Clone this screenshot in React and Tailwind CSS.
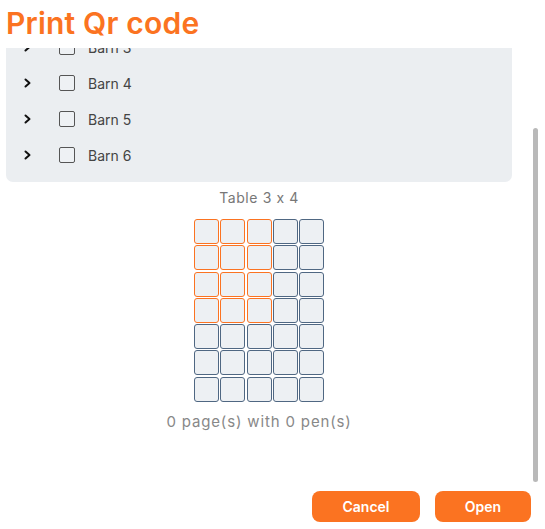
import React from 'react';

const font = { fontFamily: 'Inter, "Noto Sans", sans-serif' };

const barns = ['Barn 3', 'Barn 4', 'Barn 5', 'Barn 6'];

const Chevron = () => (
  <svg width="8" height="10" viewBox="0 0 8 10" className="shrink-0">
    <path d="M1.5 1.5 L5.5 5 L1.5 8.5" fill="none" stroke="#111" strokeWidth="2" strokeLinecap="round" strokeLinejoin="round" />
  </svg>
);

const BarnRow = ({ name }) => (
  <div className="flex items-center h-[36px]">
    <div className="w-[17px] ml-[18px] flex items-center">
      <Chevron />
    </div>
    <div className="ml-[18px] w-[16px] h-[16px] border border-[#555] rounded-[2px] bg-[#eef1f4]" />
    <span className="ml-[13px] text-[14px] text-[#444]">{name}</span>
  </div>
);

const cols = 5;
const rows = 7;
const selCols = 3;
const selRows = 4;

const App = () => {
  const cells = [];
  for (let r = 0; r < rows; r++) {
    for (let c = 0; c < cols; c++) {
      const selected = r < selRows && c < selCols;
      cells.push(
        <div
          key={`${r}-${c}`}
          className={
            selected
              ? 'w-[25px] h-[25px] rounded-[3px] border border-[#fb7321] bg-[#edf0f3]'
              : 'w-[25px] h-[25px] rounded-[3px] border border-[#4f6782] bg-[#edf0f3]'
          }
        />
      );
    }
  }

  return (
    <div className="w-[545px] h-[529px] bg-white flex flex-col overflow-hidden" style={font}>
      <div className="h-[48px] shrink-0 flex items-center px-[6px]">
        <h1 className="text-[30px] font-semibold text-[#fb7321] leading-none -mt-[2px] tracking-[0.2px]">Print Qr code</h1>
      </div>

      <div className="flex h-[437px] shrink-0">
        <div className="flex-1 flex flex-col items-center px-[6px] overflow-hidden">
          <div className="w-full bg-[#ebeef1] rounded-b-[7px] overflow-hidden h-[134px] shrink-0">
            <div className="-mt-[19px] pb-[9px]">
              {barns.map((b) => (
                <BarnRow key={b} name={b} />
              ))}
            </div>
          </div>
          <div className="mt-[6px] text-[14px] leading-[20px] text-[#777] tracking-[0.6px]">Table 3 x 4</div>
          <div className="mt-[11px] grid grid-cols-[repeat(5,25px)] gap-x-[1.2px] gap-y-[1.3px]">
            {cells}
          </div>
          <div className="mt-[9px] text-[15px] leading-[22px] text-[#888] tracking-[0.85px]">0 page(s) with 0 pen(s)</div>
        </div>
        <div className="w-[27px] shrink-0">
          <div className="ml-[15px] mt-[80px] w-[5px] h-[354px] rounded-full bg-[#b9b9b9]" />
        </div>
      </div>

      <div className="flex justify-end gap-[15px] pr-[14px] pt-[6px]">
        <button className="w-[108px] h-[31px] rounded-[8px] bg-[#fb7321] text-white text-[14px] font-semibold">Cancel</button>
        <button className="w-[96px] h-[31px] rounded-[8px] bg-[#fb7321] text-white text-[14px] font-semibold">Open</button>
      </div>
    </div>
  );
};

export default App;
